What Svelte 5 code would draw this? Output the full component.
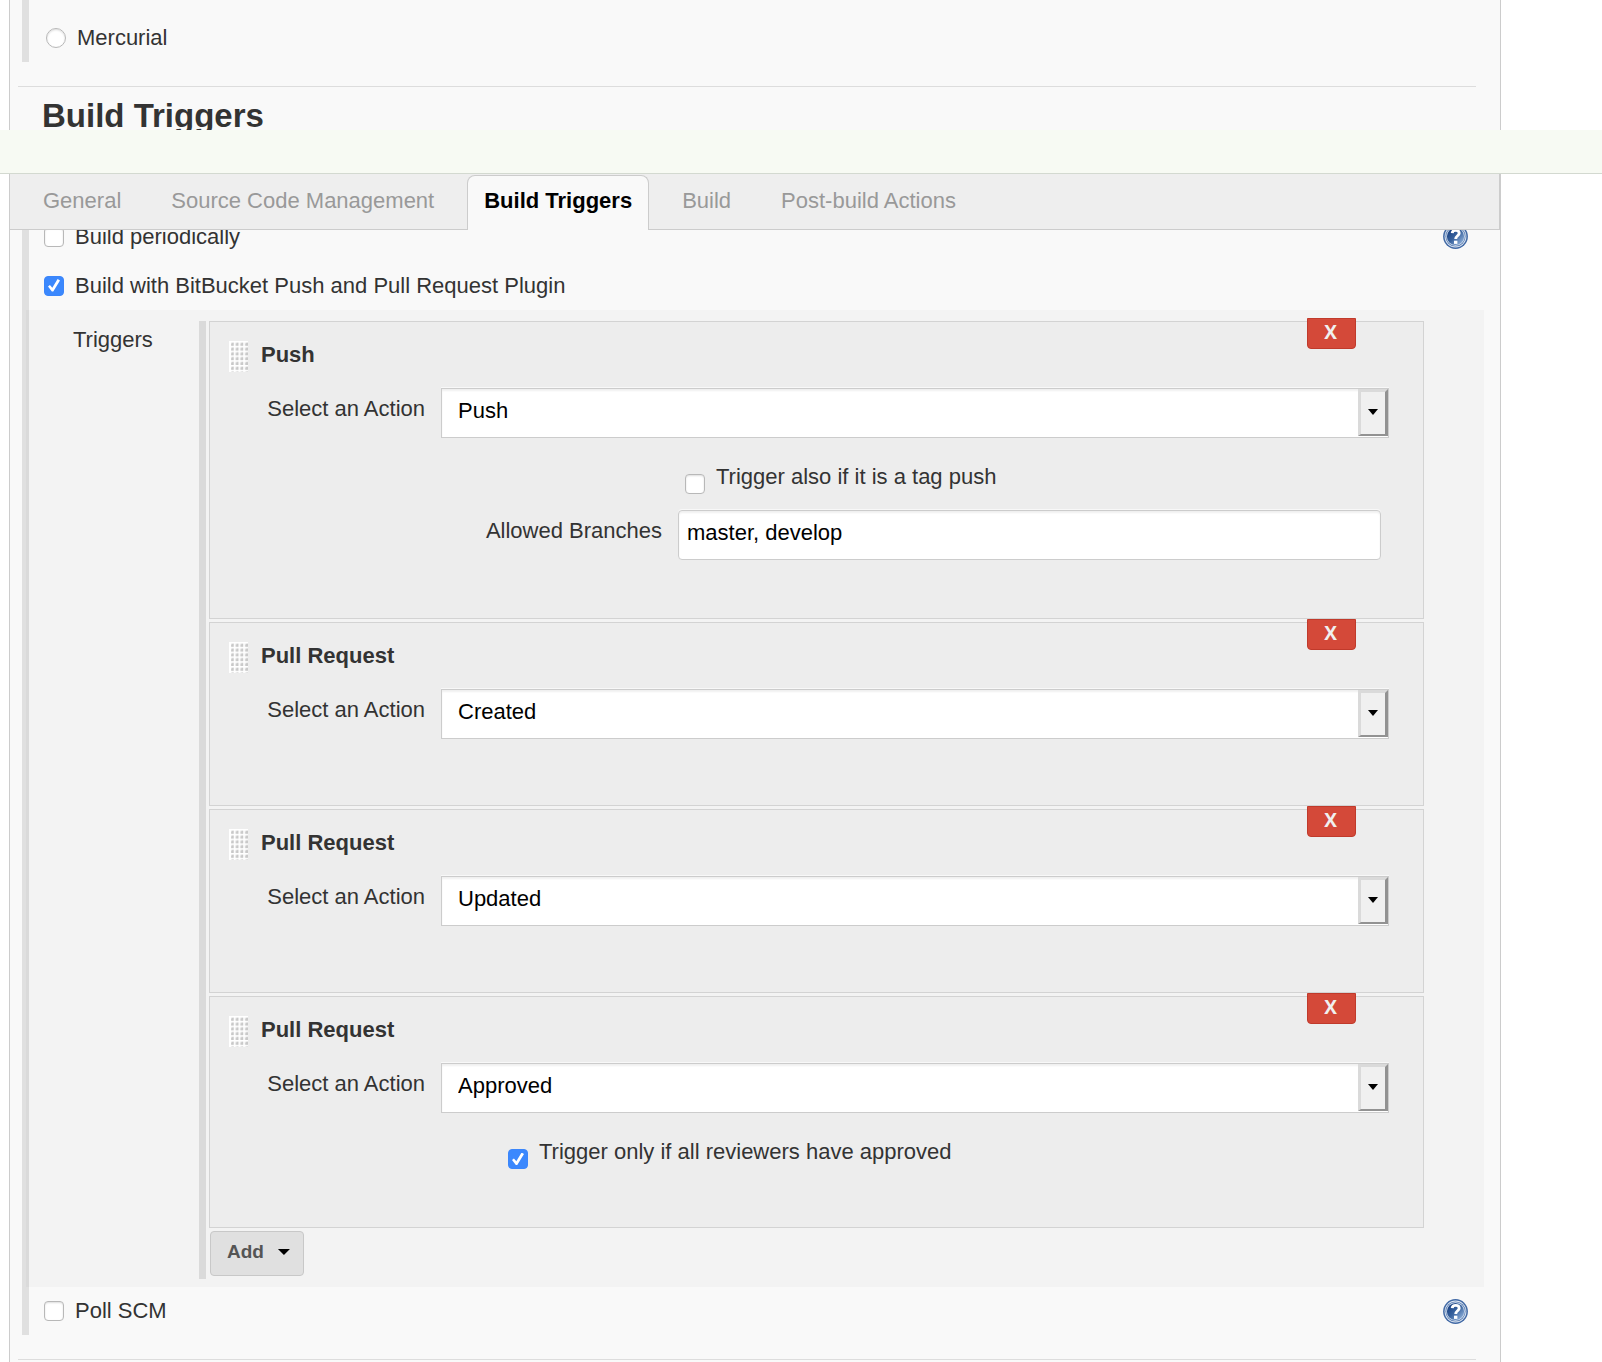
<script>
  const tabs = [
    { name: 'General' },
    { name: 'Source Code Management' },
    { name: 'Build Triggers', active: true },
    { name: 'Build' },
    { name: 'Post-build Actions' }
  ];

  const triggers = [
    { id: 'push', title: 'Push', action: 'Push' },
    { id: 'created', title: 'Pull Request', action: 'Created' },
    { id: 'updated', title: 'Pull Request', action: 'Updated' },
    { id: 'approved', title: 'Pull Request', action: 'Approved' }
  ];
</script>

{#snippet help(topic)}
  <button class="help" type="button" aria-label="Help for {topic}">
    <svg width="25" height="25" viewBox="0 0 25 25" aria-hidden="true">
      <defs>
        <linearGradient id="help-fill" x1="0" y1="0" x2="1" y2="1">
          <stop offset="0.15" stop-color="#1d4586" />
          <stop offset="0.5" stop-color="#3a649f" />
          <stop offset="0.9" stop-color="#8fb0da" />
        </linearGradient>
      </defs>
      <circle cx="12.5" cy="12.5" r="12.4" fill="#4169a5" />
      <circle cx="12.5" cy="12.5" r="10.9" fill="#dfe7f2" />
      <circle cx="12.5" cy="12.5" r="10.1" fill="#5f82b5" />
      <circle cx="12.5" cy="12.5" r="9.3" fill="#dbe4f1" />
      <circle cx="12.5" cy="12.5" r="8.6" fill="url(#help-fill)" />
      <path d="M9.2 9.2C9.4 7.2 10.8 6.4 12.7 6.4c2.1 0 3.5 1 3.5 2.9 0 2.4-3.5 2.6-3.5 5.7" fill="none" stroke="#fff" stroke-width="2.9" />
      <rect x="11" y="16.7" width="3.4" height="3.2" fill="#fff" />
    </svg>
  </button>
{/snippet}

<div class="page">
  <section class="panel">
    <div class="group top-group">
      <label class="row radio-row">
        <input type="radio" name="scm" />
        <span>Mercurial</span>
      </label>
    </div>
    <hr />
    <h1>Build Triggers</h1>
  </section>

  <header>
    <div class="band"></div>
    <nav>
      {#each tabs as tab}
        <a href="#{tab.name}" class:active={tab.active}>{tab.name}</a>
      {/each}
    </nav>
  </header>

  <section class="panel form-panel">
    <div class="group">
      <div class="row">
        <label class="check"><input type="checkbox" /><span>Build periodically</span></label>
        {@render help('Build periodically')}
      </div>
      <div class="row">
        <label class="check">
          <input type="checkbox" checked /><span>Build with BitBucket Push and Pull Request Plugin</span>
        </label>
      </div>

      <div class="nested">
        <div class="nested-label">Triggers</div>
        <div class="list">
          {#each triggers as trigger (trigger.id)}
            <article class="card">
              <button class="delete" type="button">X</button>
              <div class="card-head">
                <svg class="handle" width="19" height="31" aria-hidden="true">
                  <defs>
                    <pattern id="dots-{trigger.id}" width="4.75" height="4.8" patternUnits="userSpaceOnUse">
                      <rect width="5" height="5" fill="#fff" />
                      <path d="M1.6 4.7V1.6H4.7V4.7z" fill="#e4e4e4" />
                      <path d="M2.2 4.7V3.2L3.4 1.8H4.7V4.7z" fill="#c8c8c8" />
                    </pattern>
                  </defs>
                  <rect width="19" height="31" fill="url(#dots-{trigger.id})" />
                  <rect width="2" height="31" fill="#fff" />
                </svg>
                <h2>{trigger.title}</h2>
              </div>

              <div class="field">
                <label for="action-{trigger.id}">Select an Action</label>
                <div class="select">
                  <select id="action-{trigger.id}"><option>{trigger.action}</option></select>
                  <span class="arrow"><i class="caret"></i></span>
                </div>
              </div>

              {#if trigger.id === 'push'}
                <div class="extra push-extra">
                  <label class="check low"><input type="checkbox" /><span>Trigger also if it is a tag push</span></label>
                  <label class="branches-label" for="branches">Allowed Branches</label>
                  <input class="text" id="branches" type="text" value="master, develop" />
                </div>
              {:else if trigger.id === 'approved'}
                <div class="extra approved-extra">
                  <label class="check low">
                    <input type="checkbox" checked /><span>Trigger only if all reviewers have approved</span>
                  </label>
                </div>
              {/if}
            </article>
          {/each}
          <button class="add" type="button">Add <i class="caret"></i></button>
        </div>
      </div>

      <div class="row last">
        <label class="check"><input type="checkbox" /><span>Poll SCM</span></label>
        {@render help('Poll SCM')}
      </div>
    </div>
    <hr />
  </section>
</div>

<style>
  :global(body) {
    margin: 0;
    background: #fff;
  }

  .page {
    font: 22px/26px 'Liberation Sans', Arial, sans-serif;
    color: #333;
  }

  .page * {
    box-sizing: border-box;
  }

  button,
  input,
  select {
    margin: 0;
    font: inherit;
  }

  .panel {
    display: flow-root;
    margin: 0 101px 0 9px;
    border: solid #ccc;
    border-width: 0 1px;
    background: #f9f9f9;
  }

  .form-panel {
    padding-bottom: 2px;
  }

  .group {
    margin-left: 12px;
    border-left: 7px solid #e0e0e0;
  }

  .top-group {
    padding: 13px 0 0;
  }

  hr {
    height: 1px;
    margin: 24px 24px 0 8px;
    border: 0;
    background: #ddd;
  }

  h1 {
    margin: 10px 0 0 32px;
    font-size: 33px;
    line-height: 38px;
  }

  /* The header floats over the scrolled form on both sides. */
  header {
    position: relative;
    z-index: 1;
    margin: -5px 0 -18px;
  }

  .band {
    height: 44px;
    border-bottom: 1px solid #d3d9d0;
    background: #f7faf3;
  }

  nav {
    display: flex;
    align-items: stretch;
    gap: 16px;
    height: 56px;
    margin: 0 101px 0 9px;
    padding: 1px 0 0 16px;
    border: 1px solid #ccc;
    border-width: 0 2px 1px 1px;
    background: #eee;
  }

  nav a {
    margin-bottom: -1px;
    padding: 12px 16px 0;
    border: 1px solid transparent;
    border-bottom: 0;
    border-radius: 8px 8px 0 0;
    color: #999;
    text-decoration: none;
    white-space: nowrap;
  }

  nav a.active {
    border-color: #ccc;
    background: #f9f9f9;
    color: #000;
    font-weight: bold;
  }

  .row {
    display: flex;
    align-items: center;
    justify-content: space-between;
    height: 49px;
    padding: 0 32px 0 15px;
  }

  .last {
    height: 48px;
  }

  .radio-row {
    justify-content: flex-start;
    gap: 11px;
    padding-left: 17px;
  }

  .check {
    display: flex;
    align-items: center;
    gap: 11px;
  }

  input[type='checkbox'],
  input[type='radio'] {
    flex: none;
    display: grid;
    place-items: center;
    width: 20px;
    height: 20px;
    appearance: none;
    border: 1px solid #b8b8b8;
    border-radius: 4px;
    background: #fff;
    box-shadow: inset 0 1px 2px #ddd;
  }

  input[type='radio'] {
    border-radius: 50%;
  }

  input[type='checkbox']:checked {
    border-color: #3b86fb;
    background: #3b88fd;
    box-shadow: none;
  }

  input[type='checkbox']:checked::after {
    content: '';
    width: 12px;
    height: 13px;
    background: #fff;
    clip-path: polygon(0 58%, 16% 46%, 36% 68%, 80% 0, 100% 12%, 44% 96%, 32% 96%);
  }

  .help {
    display: block;
    padding: 0;
    border: 0;
    background: none;
  }

  .help svg {
    display: block;
  }

  .nested {
    display: flex;
    margin: 0 16px 0 -3px;
    padding: 11px 60px 8px 47px;
    background: rgba(0, 0, 0, 0.025);
  }

  .nested-label {
    flex: none;
    width: 126px;
    padding-top: 6px;
  }

  .list {
    flex: 1;
    display: flex;
    flex-direction: column;
    align-items: flex-start;
    gap: 3px;
    padding: 0 0 3px 3px;
    border-left: 7px solid #dadada;
  }

  .card {
    position: relative;
    align-self: stretch;
    padding: 19px 34px 66px 19px;
    border: 1px solid #d3d3d3;
    background: #ededed;
  }

  .card:has(.extra) {
    padding-bottom: 58px;
  }

  .delete {
    position: absolute;
    top: -4px;
    right: 67px;
    width: 49px;
    height: 31px;
    padding: 0 2px 3px 0;
    border: 1px solid #c03a2b;
    border-radius: 0 0 4px 4px;
    background: #d44939;
    color: #f0f0f0;
    font-family: 'Open Sans', sans-serif;
    font-size: 19px;
    font-weight: bold;
    line-height: 20px;
  }

  .card-head {
    display: flex;
    gap: 13px;
    height: 47px;
  }

  h2 {
    margin: 1px 0 0;
    font-size: 22px;
    line-height: 26px;
  }

  .field {
    display: flex;
    gap: 16px;
  }

  .field label {
    flex: none;
    width: 196px;
    padding-top: 8px;
    text-align: right;
  }

  .select {
    flex: 1;
    display: grid;
    grid-template-columns: 1fr 30px;
    height: 50px;
    border: 1px solid #ccc;
    background: #fff;
    box-shadow: 0 -1px #f8f8f8;
  }

  select {
    grid-area: 1 / 1 / 2 / 3;
    width: 100%;
    padding: 0 16px 4px;
    appearance: none;
    border: 0;
    background: #fff;
    box-shadow: inset 0 2px 2px #f0f0f0;
    color: #000;
  }

  .arrow {
    grid-area: 1 / 2;
    display: grid;
    place-items: center;
    height: 47px;
    border: solid;
    border-width: 3px 3px 2px;
    border-color: #dadada #929292 #929292 #dadada;
    background: #f0f0f0;
    pointer-events: none;
  }

  .caret {
    width: 12px;
    height: 6px;
    background: #000;
    clip-path: polygon(0 0, 100% 0, 50% 100%);
  }

  .arrow .caret {
    width: 10px;
    margin-bottom: 2px;
  }

  .extra {
    padding-top: 26px;
  }

  .push-extra {
    display: grid;
    grid-template-columns: 221px 1fr;
    column-gap: 16px;
    padding-right: 8px;
    padding-left: 212px;
  }

  .push-extra .check {
    grid-column: 2;
    height: 46px;
    padding-left: 7px;
  }

  .approved-extra .check {
    height: 30px;
    padding-left: 279px;
  }

  .low {
    align-items: flex-start;
  }

  .low input[type='checkbox'] {
    margin-top: 10px;
  }

  .branches-label {
    padding-top: 8px;
    text-align: right;
  }

  .text {
    width: 100%;
    height: 50px;
    padding: 0 8px 4px;
    border: 1px solid #ccc;
    border-radius: 4px;
    background: #fff;
    box-shadow: 0 -1px #f8f8f8, inset 0 2px 2px #f0f0f0;
    color: #000;
  }

  .add {
    display: flex;
    align-items: center;
    gap: 14px;
    height: 45px;
    margin-left: 1px;
    padding: 0 13px 3px 16px;
    border: 1px solid #c8c8c8;
    border-radius: 4px;
    background: #e0e0e0;
    color: #555;
    font-size: 19px;
    font-weight: bold;
  }
</style>
